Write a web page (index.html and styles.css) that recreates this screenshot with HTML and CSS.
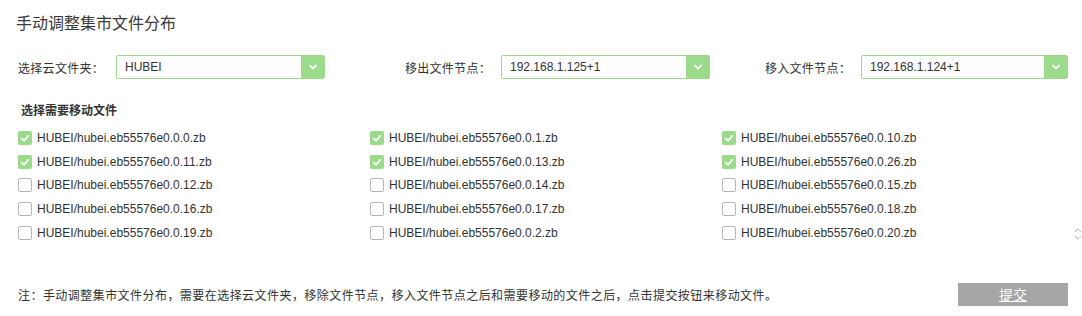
FILE: index.html
```html
<!DOCTYPE html>
<html lang="zh-CN">
<head>
    <meta charset="UTF-8">
    <title>手动调整集市文件分布</title>
    <link rel="stylesheet" href="styles.css">
</head>
<body>
    <div class="page">
        <h1 class="title">手动调整集市文件分布</h1>

        <div class="filters">
            <div class="field field-folder">
                <label>选择云文件夹：</label>
                <div class="select">
                    <span class="select-value">HUBEI</span>
                    <span class="select-arrow"><svg width="10" height="6" viewBox="0 0 10 6"><path d="M1.5 1.2 L5 4.5 L8.5 1.2" fill="none" stroke="#fff" stroke-width="1.8"/></svg></span>
                </div>
            </div>
            <div class="field field-out">
                <label>移出文件节点：</label>
                <div class="select">
                    <span class="select-value">192.168.1.125+1</span>
                    <span class="select-arrow"><svg width="10" height="6" viewBox="0 0 10 6"><path d="M1.5 1.2 L5 4.5 L8.5 1.2" fill="none" stroke="#fff" stroke-width="1.8"/></svg></span>
                </div>
            </div>
            <div class="field field-in">
                <label>移入文件节点：</label>
                <div class="select">
                    <span class="select-value">192.168.1.124+1</span>
                    <span class="select-arrow"><svg width="10" height="6" viewBox="0 0 10 6"><path d="M1.5 1.2 L5 4.5 L8.5 1.2" fill="none" stroke="#fff" stroke-width="1.8"/></svg></span>
                </div>
            </div>
        </div>

        <div class="section-title">选择需要移动文件</div>

        <div class="file-box">
            <div class="file-list" id="fileList"></div>
            <div class="scroll-hint">
                <svg width="8" height="12" viewBox="0 0 8 12"><path d="M1 4 L4 1 L7 4 M1 8 L4 11 L7 8" fill="none" stroke="#bbb" stroke-width="1"/></svg>
            </div>
        </div>

        <div class="footer">
            <p class="note">注：手动调整集市文件分布，需要在选择云文件夹，移除文件节点，移入文件节点之后和需要移动的文件之后，点击提交按钮来移动文件。</p>
            <button class="submit">提交</button>
        </div>
    </div>

    <script>
        const files = [
            ['0.0.0', true], ['0.0.1', true], ['0.0.10', true],
            ['0.0.11', true], ['0.0.13', true], ['0.0.26', true],
            ['0.0.12', false], ['0.0.14', false], ['0.0.15', false],
            ['0.0.16', false], ['0.0.17', false], ['0.0.18', false],
            ['0.0.19', false], ['0.0.2', false], ['0.0.20', false]
        ];

        const list = document.getElementById('fileList');
        files.forEach(([num, checked]) => {
            const item = document.createElement('label');
            item.className = 'file-item';
            item.innerHTML = `<span class="check${checked ? ' checked' : ''}">` +
                (checked ? '<svg width="14" height="14" viewBox="0 0 14 14"><path d="M3.2 7.2 L6 9.8 L10.8 4.4" fill="none" stroke="#fff" stroke-width="1.8"/></svg>' : '') +
                `</span><span>HUBEI/hubei.eb55576e${num}.zb</span>`;
            list.appendChild(item);
        });
    </script>
</body>
</html>
```

FILE: styles.css
```css
body {
    margin: 0;
    font-family: 'Liberation Sans', Arial, 'Noto Sans CJK SC', sans-serif;
    font-size: 12px;
    color: #333;
    background: #fff;
}
.page {
    width: 1082px;
    height: 316px;
    box-sizing: border-box;
    padding: 0 14px 0 18px;
}
.title {
    margin: 0 0 0 -2px;
    padding-top: 13px;
    font-size: 16px;
    line-height: 22px;
    font-weight: normal;
    color: #3a3a3a;
}
.filters {
    display: flex;
    margin-top: 20px;
    height: 24px;
}
.field {
    display: flex;
    align-items: center;
}
.field label {
    color: #333;
    padding-right: 10px;
    text-align: right;
    box-sizing: border-box;
    letter-spacing: 0.3px;
}
.field-folder label {
    width: 98px;
    text-align: left;
}
.field-out label {
    width: 176px;
}
.field-in label {
    width: 151px;
}
.select {
    display: flex;
    width: 209px;
    height: 24px;
    box-sizing: border-box;
    border: 1px solid #9bdb8b;
    border-radius: 2px;
}
.field-in .select {
    width: 207px;
}
.select-value {
    flex: 1;
    padding-left: 8px;
    line-height: 22px;
    color: #333;
}
.select-arrow {
    width: 23px;
    background: #9bdb8b;
    display: flex;
    align-items: center;
    justify-content: center;
}
.section-title {
    margin-top: 23px;
    margin-left: 3px;
    font-weight: bold;
    line-height: 16px;
    font-family: 'Noto Sans CJK SC', sans-serif;
}
.file-box {
    display: flex;
    align-items: flex-end;
    margin-top: 8px;
}
.file-list {
    display: grid;
    grid-template-columns: 352px 352px 352px;
    grid-auto-rows: 23.8px;
}
.file-item {
    display: flex;
    align-items: center;
    gap: 5px;
    color: #333;
}
.check {
    width: 14px;
    height: 14px;
    box-sizing: border-box;
    border: 1px solid #b5b5b5;
    border-radius: 2px;
    display: flex;
}
.check.checked {
    border: none;
    background: #9bdb8b;
}
.scroll-hint {
    padding-bottom: 2px;
}
.footer {
    display: flex;
    align-items: center;
    justify-content: space-between;
    margin-top: 38px;
}
.note {
    margin: 0;
    font-family: 'Noto Sans CJK SC', sans-serif;
    letter-spacing: 0.45px;
    color: #333;
}
.submit {
    width: 110px;
    height: 23px;
    border: none;
    background: #a6a6a6;
    color: #fff;
    font-size: 14px;
    font-family: 'Noto Sans CJK SC', sans-serif;
    text-decoration: underline;
    padding: 0;
}
```
